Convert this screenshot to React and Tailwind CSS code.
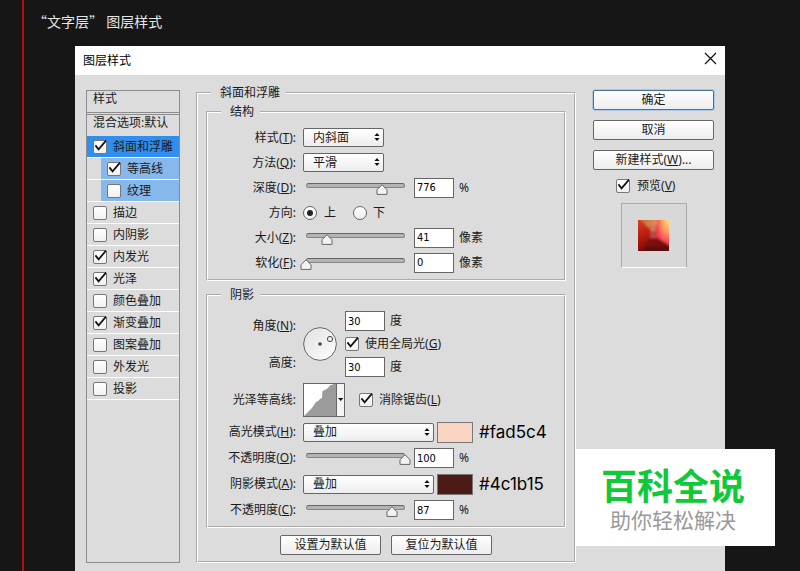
import React, { useState } from "react";

const effects = [
  { id: "bevel", name: "斜面和浮雕", on: true, selected: true },
  { id: "contour", name: "等高线", on: true, sub: true },
  { id: "texture", name: "纹理", on: false, sub: true },
  { id: "stroke", name: "描边", on: false },
  { id: "inner-shadow", name: "内阴影", on: false },
  { id: "inner-glow", name: "内发光", on: true },
  { id: "satin", name: "光泽", on: true },
  { id: "color-overlay", name: "颜色叠加", on: false },
  { id: "gradient-overlay", name: "渐变叠加", on: true },
  { id: "pattern-overlay", name: "图案叠加", on: false },
  { id: "outer-glow", name: "外发光", on: false },
  { id: "drop-shadow", name: "投影", on: false },
];

function Check({ id, defaultChecked }) {
  return (
    <span className="relative inline-flex shrink-0">
      <input
        id={id}
        type="checkbox"
        defaultChecked={defaultChecked}
        className="peer h-[14px] w-[14px] appearance-none rounded-[2px] border border-[#777] bg-linear-to-b from-white to-[#f0f0f0]"
      />
      <svg
        viewBox="0 0 14 14"
        className="pointer-events-none absolute inset-0 hidden h-[14px] w-[14px] overflow-visible peer-checked:block"
      >
        <path d="M2.4 5.4 L5.6 9.4 L13 0.6" fill="none" stroke="#111" strokeWidth="1.7" />
      </svg>
    </span>
  );
}

function Radio({ id, name, defaultChecked }) {
  return (
    <span className="relative inline-flex shrink-0">
      <input
        id={id}
        type="radio"
        name={name}
        defaultChecked={defaultChecked}
        className="peer h-[14px] w-[14px] appearance-none rounded-full border border-[#666] bg-linear-to-b from-white to-[#f0f0f0]"
      />
      <span className="pointer-events-none absolute inset-[4px] hidden rounded-full bg-[#222] peer-checked:block" />
    </span>
  );
}

function Button({ primary, className = "", children }) {
  return (
    <button
      type="button"
      className={`flex h-[20px] items-center justify-center rounded-[2px] border bg-linear-to-b from-white to-[#ededed] leading-4 ${
        primary ? "border-[#4a6f9c] ring-1 ring-[#a9c8ea]" : "border-[#666]"
      } ${className}`}
    >
      {children}
    </button>
  );
}

function Group({ title, className = "", legendClass = "ml-[13px]", children }) {
  return (
    <fieldset className={`min-w-0 border-2 border-white [border-style:groove] ${className}`}>
      <legend className={`pr-[6px] pl-[9px] leading-4 ${legendClass}`}>{title}</legend>
      {children}
    </fieldset>
  );
}

function Label({ htmlFor, text, hotkey }) {
  return (
    <label htmlFor={htmlFor} className="w-[88px] shrink-0 text-right whitespace-nowrap">
      {text}
      {hotkey && <Hotkey letter={hotkey} />}:
    </label>
  );
}

function Hotkey({ letter }) {
  return (
    <>
      (<u>{letter}</u>)
    </>
  );
}

function Select({ id, options, className = "" }) {
  return (
    <span className={`relative inline-flex ${className}`}>
      <select
        id={id}
        className="h-[19px] w-full appearance-none rounded-[2px] border border-[#666] bg-linear-to-b from-white to-[#ededed] pl-[9px] leading-4"
      >
        {options.map((o) => (
          <option key={o}>{o}</option>
        ))}
      </select>
      <svg viewBox="0 0 6 8" className="pointer-events-none absolute top-[5px] right-[4px] h-[8px] w-[6px]">
        <path d="M3 0 L5.6 3 H0.4 Z M3 8 L5.6 5 H0.4 Z" fill="#111" />
      </svg>
    </span>
  );
}

function NumberBox({ id, value, label }) {
  return (
    <input
      id={id}
      type="text"
      aria-label={label}
      defaultValue={value}
      className="h-[20px] w-[40px] border border-[#666] bg-white px-[2px] font-['DejaVu_Sans_Condensed','DejaVu_Sans',sans-serif] text-[11px] text-black"
    />
  );
}

function Slider({ id, start }) {
  const [pos, setPos] = useState(start);

  return (
    <span className="relative ml-[3px] flex w-[99px] shrink-0 pb-[5px]">
      <input
        id={id}
        type="range"
        min="0"
        max="100"
        value={pos}
        onChange={(e) => setPos(Number(e.target.value))}
        className="h-[5px] w-full appearance-none rounded-full border border-[#858585] border-t-[#666] bg-[#b4b4b4] [&::-webkit-slider-thumb]:opacity-0"
      />
      <svg
        viewBox="0 0 12 11"
        className="pointer-events-none absolute top-[1px] h-[11px] w-[12px] -translate-x-1/2"
        style={{ left: `${pos}%` }}
      >
        <path d="M6 0.7 L11 5.8 V10.4 H1 V5.8 Z" fill="#f2f2f2" stroke="#666" strokeLinejoin="round" />
      </svg>
    </span>
  );
}

function SliderRow({ id, text, hotkey, start, value, unit, className = "h-[25px]" }) {
  return (
    <div className={`flex items-center gap-[7px] ${className}`}>
      <Label htmlFor={id} text={text} hotkey={hotkey} />
      <div className="flex items-center">
        <Slider id={id} start={start} />
        <div className="ml-[9px] flex items-center gap-[5px]">
          <NumberBox value={value} label={text} />
          <span>{unit}</span>
        </div>
      </div>
    </div>
  );
}

function BlendRow({ id, text, hotkey, swatch, hex }) {
  return (
    <div className="flex h-[26px] items-center gap-[7px]">
      <Label htmlFor={id} text={text} hotkey={hotkey} />
      <div className="flex items-center gap-[3px]">
        <Select id={id} options={["叠加", "滤色", "正片叠底"]} className="w-[131px]" />
        <button type="button" aria-label={hex} className={`h-[21px] w-[36px] border border-[#777] ${swatch}`} />
        <span className="ml-[3px] font-['Inter',sans-serif] text-[17px] text-black">{hex}</span>
      </div>
    </div>
  );
}

function EffectList() {
  return (
    <aside className="mt-[5px] w-[94px] shrink-0 border border-[#8c8c8c]">
      <div className="h-[22px] border-b border-[#8c8c8c] pl-[6px] leading-4">样式</div>
      <div className="mt-px h-[22px] border-t border-[#8c8c8c] pl-[6px] leading-4 whitespace-nowrap">混合选项:默认</div>
      <ul>
        {effects.map((fx) => (
          <li key={fx.id} className={`border-b border-white ${fx.sub ? "pl-[14px]" : ""}`}>
            <div
              className={`flex h-[21px] items-center gap-[6px] pl-[6px] ${
                fx.selected ? "bg-[#2f8eee]" : fx.sub ? "bg-[#86b8ec]" : ""
              }`}
            >
              <Check id={fx.id} defaultChecked={fx.on} />
              <label htmlFor={fx.id} className="whitespace-nowrap">{fx.name}</label>
            </div>
          </li>
        ))}
      </ul>
    </aside>
  );
}

function Structure() {
  return (
    <Group title="结构" className="pt-[5px] pb-[4px]">
      <div className="flex h-[25px] items-center gap-[7px]">
        <Label htmlFor="style" text="样式" hotkey="T" />
        <Select id="style" options={["内斜面", "外斜面", "浮雕效果"]} className="w-[81px]" />
      </div>
      <div className="flex h-[25px] items-center gap-[7px]">
        <Label htmlFor="technique" text="方法" hotkey="Q" />
        <Select id="technique" options={["平滑", "雕刻清晰", "雕刻柔和"]} className="w-[81px]" />
      </div>
      <SliderRow id="depth" text="深度" hotkey="D" start={77} value="776" unit="%" />
      <div className="flex h-[25px] items-center gap-[7px]">
        <Label htmlFor="dir-up" text="方向" />
        <Radio id="dir-up" name="direction" defaultChecked />
        <label htmlFor="dir-up">上</label>
        <span className="ml-[10px] flex items-center gap-[6px]">
          <Radio id="dir-down" name="direction" />
          <label htmlFor="dir-down">下</label>
        </span>
      </div>
      <SliderRow id="size" text="大小" hotkey="Z" start={21} value="41" unit="像素" />
      <SliderRow id="soften" text="软化" hotkey="F" start={0} value="0" unit="像素" />
    </Group>
  );
}

function Shading() {
  return (
    <Group title="阴影" className="mt-[6px] pt-[4px] pb-[3px]">
      <div className="flex h-[74px] items-center gap-[7px]">
        <div className="flex flex-col leading-[37px]">
          <Label htmlFor="angle" text="角度" hotkey="N" />
          <Label htmlFor="altitude" text="高度" />
        </div>
        <svg viewBox="0 0 34 34" className="h-[34px] w-[34px] shrink-0">
          <defs>
            <linearGradient id="dial" x1="0" y1="0" x2="1" y2="1">
              <stop offset="0" stopColor="#e0e0e0" />
              <stop offset="1" stopColor="#fff" />
            </linearGradient>
          </defs>
          <circle cx="17" cy="17" r="16.4" fill="url(#dial)" stroke="#666" />
          <circle cx="17" cy="17" r="1.8" fill="#444" />
          <circle cx="27" cy="12" r="2.6" fill="#eee" stroke="#444" />
        </svg>
        <div className="ml-px flex flex-col">
          <div className="flex h-[23px] items-center gap-[5px]">
            <NumberBox id="angle" value="30" />
            <span>度</span>
          </div>
          <div className="flex h-[23px] items-center gap-[6px]">
            <Check id="global-light" defaultChecked />
            <label htmlFor="global-light">
              使用全局光
              <Hotkey letter="G" />
            </label>
          </div>
          <div className="flex h-[23px] items-center gap-[5px]">
            <NumberBox id="altitude" value="30" />
            <span>度</span>
          </div>
        </div>
      </div>

      <div className="flex h-[38px] items-center gap-[7px]">
        <Label htmlFor="gloss" text="光泽等高线" />
        <button id="gloss" type="button" className="flex h-[34px] w-[42px] border border-[#666] bg-white">
          <svg viewBox="0 0 40 32" className="h-full w-full">
            <path
              d="M0 32 L3 29 L6 26 L8 24 L10 21 L12 18 L14 17 L16 15 L18 14 L18.5 7 L21 6 L24 4 L26 1.5 L30 0 H32 V32 Z"
              fill="#9b9b9b"
            />
            <path d="M33 0 H40 V32 H33 Z" fill="#f4f4f4" />
            <path d="M32.5 0 V32" stroke="#666" />
            <path d="M34 14 H39.4 L36.7 17 Z" fill="#111" />
          </svg>
        </button>
        <span className="ml-[7px] flex items-center gap-[6px]">
          <Check id="anti-alias" defaultChecked />
          <label htmlFor="anti-alias">
            消除锯齿
            <Hotkey letter="L" />
          </label>
        </span>
      </div>

      <BlendRow id="hl-mode" text="高光模式" hotkey="H" swatch="bg-[#fad5c4]" hex="#fad5c4" />
      <SliderRow
        id="hl-opacity"
        text="不透明度"
        hotkey="O"
        start={100}
        value="100"
        unit="%"
        className="h-[26px]"
      />
      <BlendRow id="sh-mode" text="阴影模式" hotkey="A" swatch="bg-[#4c1b15]" hex="#4c1b15" />
      <SliderRow
        id="sh-opacity"
        text="不透明度"
        hotkey="C"
        start={87}
        value="87"
        unit="%"
        className="h-[26px]"
      />
    </Group>
  );
}

function PreviewTile() {
  return (
    <div className="mx-auto mt-[9px] flex h-[65px] w-[66px] items-center justify-center border border-[#aaa] border-b-white bg-[#d8d8d8]">
      <svg viewBox="0 0 31 31" className="h-[31px] w-[31px]">
        <defs>
          <linearGradient id="pv-left" x1="0" y1="0" x2="0.4" y2="1">
            <stop offset="0" stopColor="#d8401c" />
            <stop offset="0.5" stopColor="#b81a10" />
            <stop offset="1" stopColor="#6a0a08" />
          </linearGradient>
          <linearGradient id="pv-top" x1="0" y1="0" x2="1" y2="0">
            <stop offset="0" stopColor="#c06a38" />
            <stop offset="0.5" stopColor="#dc9058" />
            <stop offset="1" stopColor="#ffcf68" />
          </linearGradient>
          <radialGradient id="pv-right" cx="0.8" cy="0.1" r="1">
            <stop offset="0" stopColor="#ffe27a" />
            <stop offset="0.4" stopColor="#ff9a60" />
            <stop offset="0.7" stopColor="#f8505a" />
            <stop offset="1" stopColor="#e62a38" />
          </radialGradient>
          <filter id="pv-soft" x="-10%" y="-10%" width="120%" height="120%">
            <feGaussianBlur stdDeviation="0.8" />
          </filter>
        </defs>
        <path d="M0 0 H31 V31 H0 Z" fill="url(#pv-left)" />
        <g filter="url(#pv-soft)">
          <path d="M1 -2 H33 V6 H20 L10 8 Z" fill="url(#pv-top)" />
          <path d="M19 -2 H33 V27 L18 17 Z" fill="url(#pv-right)" />
          <path d="M5 33 L12 19 H19 L33 29 V33 Z" fill="#5c0a08" />
          <path d="M9 27 L13 19 H19 L27 26 Z" fill="#7d0f0d" />
          <path d="M12 5 H18 V11 H12 Z" fill="#d5755a" />
          <path d="M12 11 H18 V18 H12 Z" fill="#b9484a" />
        </g>
      </svg>
    </div>
  );
}

function Actions() {
  return (
    <div className="mt-[5px] flex w-[121px] shrink-0 flex-col">
      <div className="flex flex-col gap-[10px]">
        <Button primary>确定</Button>
        <Button>取消</Button>
        <Button>
          新建样式
          <Hotkey letter="W" />
          ...
        </Button>
      </div>
      <div className="mt-[8px] flex items-center gap-[7px] pl-[23px]">
        <Check id="preview" defaultChecked />
        <label htmlFor="preview">
          预览
          <Hotkey letter="V" />
        </label>
      </div>
      <PreviewTile />
    </div>
  );
}

function App() {
  return (
    <div className="relative min-h-screen bg-[#161616] pl-[22px] font-['Noto_Sans','Noto_Sans_CJK_SC',sans-serif] text-[12px] text-[#1a1a1a]">
      <main className="flex min-h-screen flex-col border-l-2 border-[#b40f10]">
        <h1
          lang="zh-CN"
          className="h-[46px] pl-[9px] font-['Noto_Sans_CJK_SC',sans-serif] text-[14px] leading-[42px] text-[#e6e6e6]"
        >
          “文字层” 图层样式
        </h1>

        <section className="mr-[75px] ml-[51px] flex flex-1 flex-col bg-[#dcdcdc]">
          <header className="flex h-[29px] items-center justify-between bg-white pr-[8px] pl-[8px]">
            <h2 className="text-black">图层样式</h2>
            <button type="button" aria-label="关闭" className="mb-[5px]">
              <svg viewBox="0 0 13 13" className="h-[13px] w-[13px]">
                <path d="M1 1 L12 12 M12 1 L1 12" stroke="#111" strokeWidth="1.2" />
              </svg>
            </button>
          </header>

          <form className="flex flex-1 items-stretch px-[11px] pt-[10px] pb-[8px] leading-4">
            <EffectList />
            <Group
              title="斜面和浮雕"
              className="mr-[17px] ml-[16px] flex-1 px-[8px] pt-[3px] pb-[6px]"
              legendClass="ml-[5px]"
            >
              <Structure />
              <Shading />
              <div className="mt-[7px] flex justify-center gap-[10px]">
                <Button className="w-[101px]">设置为默认值</Button>
                <Button className="w-[101px]">复位为默认值</Button>
              </div>
            </Group>
            <Actions />
          </form>
        </section>
      </main>

      <div className="absolute right-[25px] bottom-[25px] flex h-[97px] w-[200px] flex-col items-center justify-center bg-white pt-[4px] pr-[4px] font-['Noto_Sans_CJK_SC',sans-serif]">
        <strong className="text-[36px] leading-[38px] font-bold text-[#0fc93a]">百科全说</strong>
        <span className="text-[21px] leading-[32px] text-[#999]">助你轻松解决</span>
      </div>
    </div>
  );
}

export default App;
